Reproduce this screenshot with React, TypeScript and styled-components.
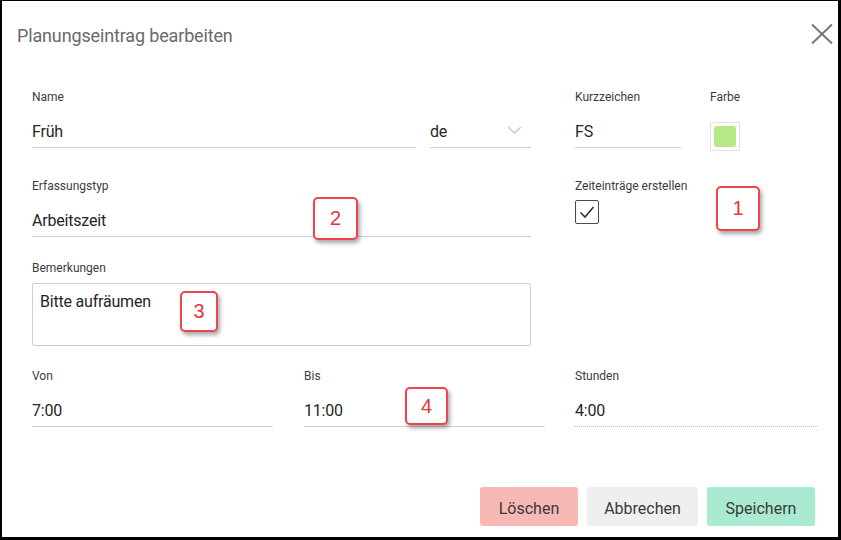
import React from 'react';
import styled, { createGlobalStyle } from 'styled-components';

const GlobalStyle = createGlobalStyle`
	html, body {
		margin: 0;
		padding: 0;
		background: #000;
	}

	body {
		font-family: Roboto, "Liberation Sans", Arial, sans-serif;
	}
`;

const badges = [
	{ label: '1', left: 714, top: 185, width: 44, height: 45 },
	{ label: '2', left: 311, top: 196, width: 45, height: 43 },
	{ label: '3', left: 178, top: 290, width: 38, height: 41 },
	{ label: '4', left: 403, top: 386, width: 43, height: 38 },
];

const App: React.FunctionComponent = () => (
	<>
		<GlobalStyle />
		<Frame>
			<Header>
				<Title>{'Planungseintrag bearbeiten'}</Title>
				<CloseButton aria-label={'Schließen'}>
					<svg width={22} height={22} viewBox={'0 0 22 22'}>
						<path d={'M1 1.5 L21 20.5 M21 1.5 L1 20.5'} stroke={'#777'} strokeWidth={2} fill={'none'} />
					</svg>
				</CloseButton>
			</Header>

			<Body>
				<Row $top={0}>
					<Field $width={384}>
						<Label>{'Name'}</Label>
						<Input>{'Früh'}</Input>
					</Field>
					<Field $width={101} $offset={14}>
						<Label>{'\u00a0'}</Label>
						<Input>
							{'de'}
							<Chevron width={15} height={8} viewBox={'0 0 15 8'}>
								<path d={'M1 1 L7.5 7 L14 1'} stroke={'#c9c9c9'} strokeWidth={1.4} fill={'none'} />
							</Chevron>
						</Input>
					</Field>
					<Field $width={106} $offset={44}>
						<Label>{'Kurzzeichen'}</Label>
						<Input>{'FS'}</Input>
					</Field>
					<Field $offset={29}>
						<Label>{'Farbe'}</Label>
						<Swatch>
							<SwatchColor $color={'#b8e786'} />
						</Swatch>
					</Field>
				</Row>

				<Row $top={27}>
					<Field $width={499}>
						<Label>{'Erfassungstyp'}</Label>
						<Input>{'Arbeitszeit'}</Input>
					</Field>
					<Field $offset={44}>
						<Label>{'Zeiteinträge erstellen'}</Label>
						<Checkbox>
							<svg width={16} height={14} viewBox={'0 0 16 14'}>
								<path d={'M1.5 7.5 L6 12 L14.5 2'} stroke={'#333'} strokeWidth={1.6} fill={'none'} />
							</svg>
						</Checkbox>
					</Field>
				</Row>

				<Row $top={23}>
					<Field $width={499}>
						<Label>{'Bemerkungen'}</Label>
						<TextArea>{'Bitte aufräumen'}</TextArea>
					</Field>
				</Row>

				<Row $top={22}>
					<Field $width={241}>
						<Label>{'Von'}</Label>
						<Input>{'7:00'}</Input>
					</Field>
					<Field $width={241} $offset={31}>
						<Label>{'Bis'}</Label>
						<Input>{'11:00'}</Input>
					</Field>
					<Field $width={243} $offset={30}>
						<Label>{'Stunden'}</Label>
						<Input $readOnly>{'4:00'}</Input>
					</Field>
				</Row>
			</Body>

			<Footer>
				<Button $background={'#f8b8b4'} $width={98}>{'Löschen'}</Button>
				<Button $background={'#efefef'} $width={111}>{'Abbrechen'}</Button>
				<Button $background={'#aaead0'} $width={108}>{'Speichern'}</Button>
			</Footer>

			{badges.map(b => (
				<Badge
					key={b.label}
					style={{ left: b.left, top: b.top, width: b.width, height: b.height }}
				>
					{b.label}
				</Badge>
			))}
		</Frame>
	</>
);

export default App;

const Frame = styled.div`
	position: relative;
	box-sizing: border-box;
	display: flex;
	flex-direction: column;
	width: 841px;
	height: 540px;

	background: #fff;
	border-style: solid;
	border-color: #000;
	border-width: 1px 3px 3px 2px;
`;

const Header = styled.div`
	display: flex;
	align-items: center;
	justify-content: space-between;
	height: 68px;
	padding: 0 5px 0 15px;
`;

const Title = styled.h1`
	margin: 0;
	font-size: 18px;
	font-weight: 400;
	letter-spacing: -0.15px;
	color: #6a6a6a;
`;

const CloseButton = styled.button`
	display: flex;
	padding: 0;
	margin-top: -2px;
	border: 0;
	background: none;
`;

const Body = styled.div`
	display: flex;
	flex-direction: column;
	padding: 20px 0 0 30px;
`;

const Row = styled.div<{ $top: number }>`
	display: flex;
	align-items: flex-start;
	margin-top: ${p => p.$top}px;
`;

const Field = styled.div<{ $width?: number; $offset?: number }>`
	display: flex;
	flex-direction: column;
	flex: none;
	width: ${p => (p.$width ? `${p.$width}px` : 'auto')};
	margin-left: ${p => p.$offset ?? 0}px;
`;

const Label = styled.label`
	height: 16px;
	font-size: 12px;
	line-height: 16px;
	color: #3c3c3c;
`;

const Input = styled.div<{ $readOnly?: boolean }>`
	display: flex;
	align-items: center;
	justify-content: space-between;
	box-sizing: border-box;
	height: 36px;
	margin-top: 7px;
	padding: 3px 9px 0 0;

	font-size: 16px;
	letter-spacing: -0.2px;
	color: #262626;
	border-bottom: 1px ${p => (p.$readOnly ? 'dotted #b5b5b5' : 'solid #cfcfcf')};
`;

const Chevron = styled.svg`
	display: block;
	margin-top: -3px;
`;

const Swatch = styled.div`
	box-sizing: border-box;
	width: 30px;
	height: 29px;
	margin-top: 17px;
	padding: 3px;

	border: 1px solid #e2e2e2;
`;

const SwatchColor = styled.div<{ $color: string }>`
	width: 22px;
	height: 21px;
	border-radius: 3px;
	background: ${p => p.$color};
`;

const Checkbox = styled.div`
	display: flex;
	align-items: center;
	justify-content: center;
	box-sizing: border-box;
	width: 24px;
	height: 24px;
	margin-top: 6px;

	border: 1px solid #4a4a4a;
	border-radius: 2px;
`;

const TextArea = styled.div`
	box-sizing: border-box;
	height: 63px;
	margin-top: 7px;
	padding: 8px 7px;

	font-size: 16px;
	line-height: 20px;
	letter-spacing: -0.2px;
	color: #262626;
	border: 1px solid #cfcfcf;
	border-radius: 2px;
`;

const Footer = styled.div`
	display: flex;
	justify-content: flex-end;
	gap: 9px;
	margin-top: auto;
	padding: 0 23px 11px 0;
`;

const Button = styled.button<{ $background: string; $width: number }>`
	width: ${p => p.$width}px;
	height: 39px;
	padding: 3px 0 0;

	font-family: Roboto, "Liberation Sans", Arial, sans-serif;
	font-size: 16px;
	color: #3a3a3a;
	background: ${p => p.$background};
	border: 0;
	border-radius: 3px;
`;

const Badge = styled.div`
	position: absolute;
	box-sizing: border-box;
	display: flex;
	align-items: center;
	justify-content: center;

	font-family: "Liberation Sans", Arial, sans-serif;
	font-size: 20px;
	color: #e8343a;
	background: #fff;
	border: 2px solid #f0444a;
	border-radius: 5px;
	box-shadow: 2px 3px 4px rgba(0, 0, 0, 0.35);
`;
